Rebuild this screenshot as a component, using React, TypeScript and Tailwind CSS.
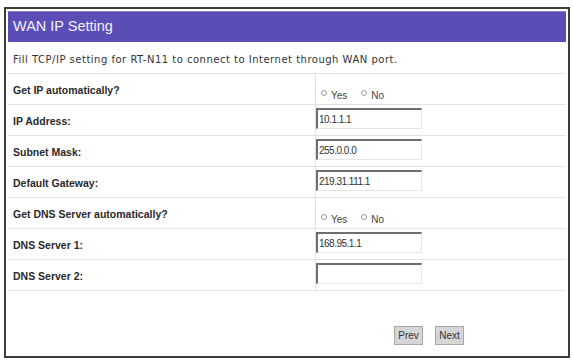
import React from "react";

const rows: { label: string; kind: "radio" | "input"; value?: string }[] = [
  { label: "Get IP automatically?", kind: "radio" },
  { label: "IP Address:", kind: "input", value: "10.1.1.1" },
  { label: "Subnet Mask:", kind: "input", value: "255.0.0.0" },
  { label: "Default Gateway:", kind: "input", value: "219.31.111.1" },
  { label: "Get DNS Server automatically?", kind: "radio" },
  { label: "DNS Server 1:", kind: "input", value: "168.95.1.1" },
  { label: "DNS Server 2:", kind: "input", value: "" },
];

const Radio: React.FC<{ label: string }> = ({ label }) => (
  <span className="flex items-end">
    <span className="mb-[7px] mr-[4px] inline-block h-[6px] w-[6px] rounded-full border border-[#9a9a9a] bg-white" />
    <span>{label}</span>
  </span>
);

const App: React.FC = () => {
  return (
    <div className="h-[360px] w-[573px] bg-white pl-[4px] pt-[7px]">
      <div
        className="flex h-[351px] w-[566px] flex-col border-2 border-[#3c3c3c] bg-white p-[2px]"
        style={{ fontFamily: "'Liberation Sans', Arial, sans-serif" }}
      >
        {/* title bar */}
        <div className="flex h-[31px] items-center border-t border-[#8a82c8] bg-[#5a4eb6] pl-[5px] text-[14.5px] text-[#f2f0ff]">
          WAN IP Setting
        </div>

        {/* description */}
        <div
          className="flex h-[32px] items-center border-b border-[#e2e2e2] pl-[5px] pt-[3px] text-[10px] tracking-[0.5px] text-[#333]"
          style={{ fontFamily: "'DejaVu Sans', Verdana, sans-serif" }}
        >
          Fill TCP/IP setting for RT-N11 to connect to Internet through WAN port.
        </div>

        {/* form rows */}
        {rows.map((r) => (
          <div key={r.label} className="flex h-[31px] border-b border-[#e2e2e2]">
            <div className="flex w-[308px] items-center border-r border-[#e2e2e2] pl-[5px] pt-[3px] text-[10.5px] font-bold text-[#2a2a2a]">
              {r.label}
            </div>
            <div className="flex flex-1 items-start text-[10px] text-[#444]">
              {r.kind === "radio" ? (
                <div className="flex items-end gap-[14px] pl-[5px] pt-[14px]">
                  <Radio label="Yes" />
                  <Radio label="No" />
                </div>
              ) : (
                <div className="mt-[3px] flex h-[21px] w-[106px] items-center border-l-2 border-t-2 border-[#6e6e6e] border-b border-r border-b-[#e6e6e6] border-r-[#e6e6e6] pl-[1px] text-[10px] tracking-[-0.5px] text-[#333]">
                  {r.value}
                </div>
              )}
            </div>
          </div>
        ))}

        {/* buttons */}
        <div className="flex flex-1 items-end justify-end gap-[12px] pb-[9px] pr-[102px]">
          <button className="h-[19px] w-[29px] border border-[#a8a8a8] bg-[#d6d6d6] text-[10px] text-[#333]">
            Prev
          </button>
          <button className="h-[19px] w-[29px] border border-[#a8a8a8] bg-[#d6d6d6] text-[10px] text-[#333]">
            Next
          </button>
        </div>
      </div>
    </div>
  );
};

export default App;
